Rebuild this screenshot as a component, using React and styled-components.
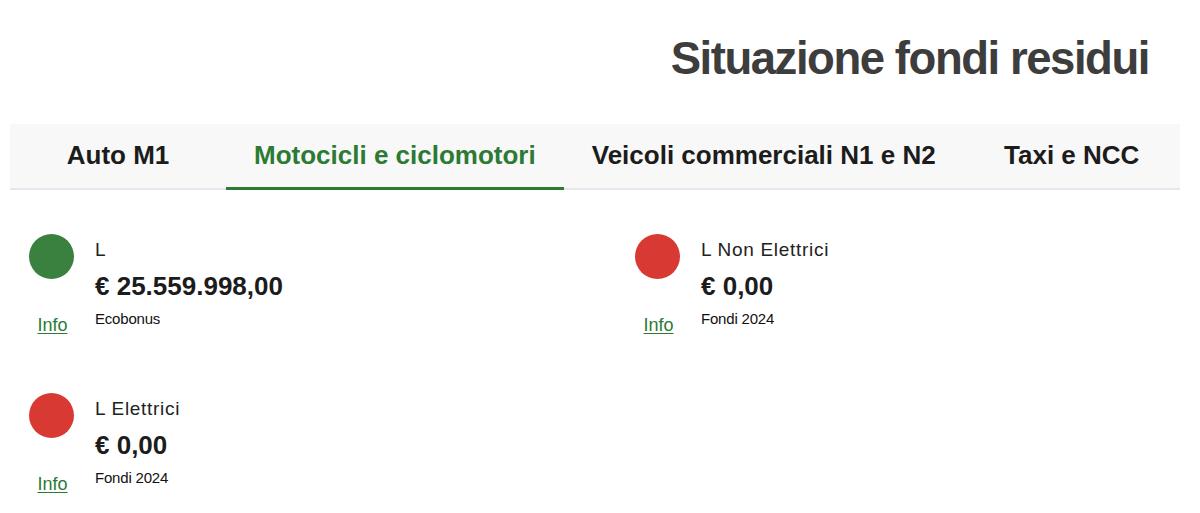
import React from "react";
import styled, { createGlobalStyle } from "styled-components";

const GlobalStyle = createGlobalStyle`
  html, body { margin: 0; padding: 0; background: #ffffff; }
  body { font-family: "Liberation Sans", Arial, sans-serif; color: #222; }
`;

const Page = styled.div`
  margin: 0 20px 0 10px;
`;

const Header = styled.header`
  display: flex;
  justify-content: flex-end;
  padding: 31px 31px 0 0;
  height: 124px;
  box-sizing: border-box;
`;

const Title = styled.h1`
  margin: 0;
  font-family: "Liberation Sans", Arial, sans-serif;
  font-weight: 700;
  font-size: 45.5px;
  line-height: 56px;
  letter-spacing: -1.45px;
  color: #3d3d3d;
`;

const TabBar = styled.nav`
  display: flex;
  background: #f8f8f8;
  box-shadow: inset 0 -2px 0 #e6e6ee;
  height: 66px;
  overflow: hidden;
`;

const Tab = styled.button`
  flex: 0 0 auto;
  min-width: 216px;
  padding: 0 28px;
  box-sizing: border-box;
  height: 66px;
  border: none;
  border-bottom: 3px solid ${(p) => (p.$active ? "#2c7a34" : "transparent")};
  background: transparent;
  font-family: "Liberation Sans", Arial, sans-serif;
  font-weight: 700;
  font-size: 26px;
  color: ${(p) => (p.$active ? "#2c7a34" : "#1c1c1c")};
  text-align: center;
  white-space: nowrap;
  cursor: pointer;
`;

const Funds = styled.section`
  display: grid;
  grid-template-columns: 606px 1fr;
  row-gap: 57px;
  padding: 44px 0 0 19px;
`;

const Item = styled.div`
  display: flex;
  gap: 21px;
  align-items: flex-start;
`;

const Side = styled.div`
  width: 45px;
  display: flex;
  flex-direction: column;
  align-items: center;
`;

const Dot = styled.span`
  display: block;
  width: 45px;
  height: 45px;
  border-radius: 50%;
  background: ${(p) => p.$color};
`;

const InfoLink = styled.a`
  margin-top: 35px;
  margin-left: 2px;
  font-size: 18px;
  line-height: 22px;
  color: #2c7a34;
  text-decoration: underline;
  text-underline-offset: 2px;
  cursor: pointer;
`;

const Body = styled.div`
  padding-top: 4px;
  display: flex;
  flex-direction: column;
`;

const Label = styled.div`
  font-size: 19px;
  line-height: 24px;
  letter-spacing: 0.7px;
  color: #222;
`;

const Amount = styled.div`
  margin-top: 8px;
  font-size: 26px;
  line-height: 32px;
  font-weight: 700;
  color: #1c1c1c;
`;

const Note = styled.div`
  margin-top: 7px;
  font-size: 15px;
  line-height: 20px;
  letter-spacing: -0.2px;
  color: #111;
`;

const tabs = [
  "Auto M1",
  "Motocicli e ciclomotori",
  "Veicoli commerciali N1 e N2",
  "Taxi e NCC",
];

const funds = [
  { label: "L", amount: "€ 25.559.998,00", note: "Ecobonus", color: "#3a803e" },
  { label: "L Non Elettrici", amount: "€ 0,00", note: "Fondi 2024", color: "#d83a33" },
  { label: "L Elettrici", amount: "€ 0,00", note: "Fondi 2024", color: "#d83a33" },
];

export default function App() {
  return (
    <Page>
      <GlobalStyle />
      <Header>
        <Title>Situazione fondi residui</Title>
      </Header>
      <TabBar>
        {tabs.map((t, i) => (
          <Tab key={t} $active={i === 1}>
            {t}
          </Tab>
        ))}
      </TabBar>
      <Funds>
        {funds.map((f) => (
          <Item key={f.label}>
            <Side>
              <Dot $color={f.color} />
              <InfoLink>Info</InfoLink>
            </Side>
            <Body>
              <Label>{f.label}</Label>
              <Amount>{f.amount}</Amount>
              <Note>{f.note}</Note>
            </Body>
          </Item>
        ))}
      </Funds>
    </Page>
  );
}
